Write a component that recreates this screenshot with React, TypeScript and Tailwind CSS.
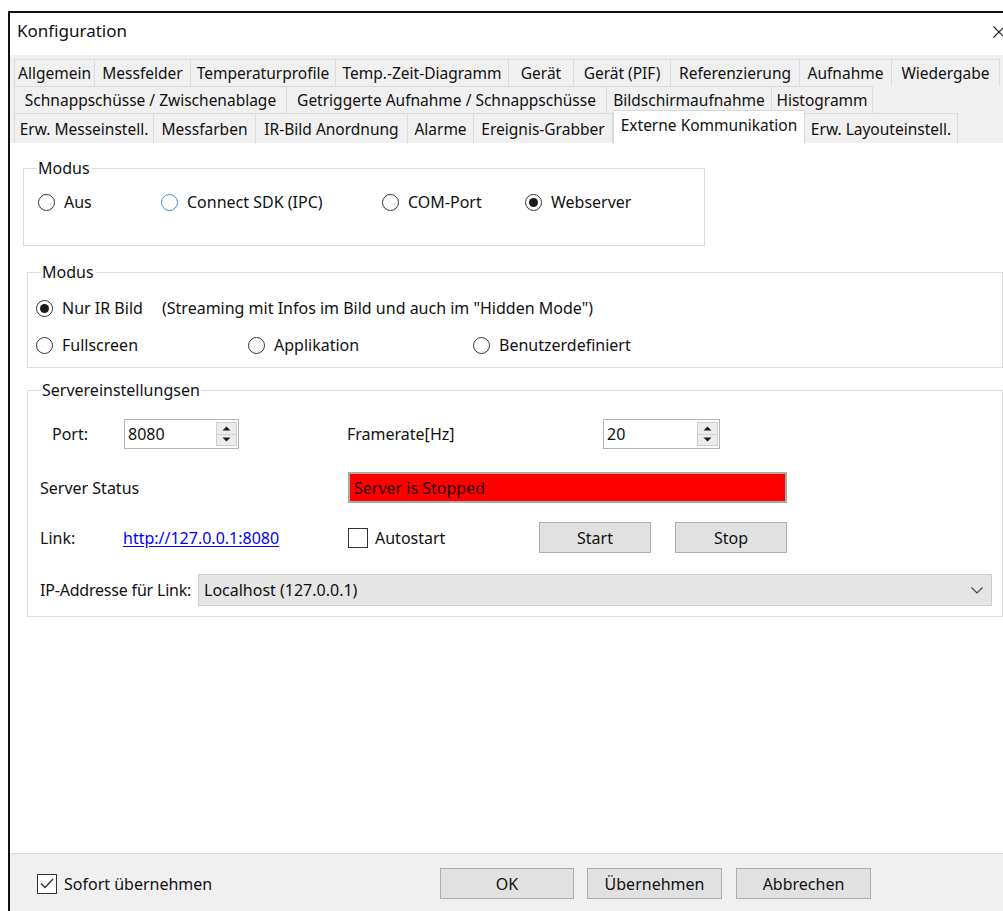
import React from "react";

const FONT = { fontFamily: '"Noto Sans", "Open Sans", "Liberation Sans", sans-serif' };

type Tab = { label: string; w: number; active?: boolean };

const row1: Tab[] = [
  { label: "Allgemein", w: 81 },
  { label: "Messfelder", w: 96 },
  { label: "Temperaturprofile", w: 145 },
  { label: "Temp.-Zeit-Diagramm", w: 173 },
  { label: "Gerät", w: 65 },
  { label: "Gerät (PIF)", w: 97 },
  { label: "Referenzierung", w: 129 },
  { label: "Aufnahme", w: 92 },
  { label: "Wiedergabe", w: 108 },
];

const row2: Tab[] = [
  { label: "Schnappschüsse / Zwischenablage", w: 273 },
  { label: "Getriggerte Aufnahme / Schnappschüsse", w: 320 },
  { label: "Bildschirmaufnahme", w: 165 },
  { label: "Histogramm", w: 101 },
];

const row3: Tab[] = [
  { label: "Erw. Messeinstell.", w: 140 },
  { label: "Messfarben", w: 102 },
  { label: "IR-Bild Anordnung", w: 152 },
  { label: "Alarme", w: 66 },
  { label: "Ereignis-Grabber", w: 139 },
  { label: "Externe Kommunikation", w: 192, active: true },
  { label: "Erw. Layouteinstell.", w: 153 },
];

function TabRow({ tabs, h }: { tabs: Tab[]; h: number }) {
  return (
    <div className="flex items-end" style={{ height: h }}>
      {tabs.map((t, i) =>
        t.active ? (
          <div
            key={t.label}
            className="relative z-10 -mt-[3px] flex h-[calc(100%+4px)] items-start justify-center self-start whitespace-nowrap border-x border-t border-[#d9d9d9] bg-white pt-[4px] text-[15.5px] leading-[20px] text-[#111]"
            style={{ width: t.w }}
          >
            {t.label}
          </div>
        ) : (
          <div
            key={t.label}
            className={
              "flex h-full items-center justify-center whitespace-nowrap border-t border-r border-[#dadada] bg-[#f0f0f0] text-[15.5px] leading-[20px] text-[#111] " +
              (i === 0 ? "border-l" : "")
            }
            style={{ width: t.w }}
          >
            {t.label}
          </div>
        )
      )}
    </div>
  );
}

function Radio({ checked, focus }: { checked?: boolean; focus?: boolean }) {
  return (
    <span
      className={
        "flex h-[17px] w-[17px] shrink-0 items-center justify-center rounded-full border bg-white " +
        (focus ? "border-[#3b8fd6]" : "border-[#333333]")
      }
    >
      {checked && <span className="h-[9px] w-[9px] rounded-full bg-[#1a1a1a]" />}
    </span>
  );
}

function RadioItem({ label, checked, focus }: { label: string; checked?: boolean; focus?: boolean }) {
  return (
    <div className="flex items-center gap-[9px] whitespace-nowrap">
      <Radio checked={checked} focus={focus} />
      <span>{label}</span>
    </div>
  );
}

function Group({ title, titleLeft, children, className }: { title: string; titleLeft: number; children: React.ReactNode; className: string }) {
  return (
    <div className={"relative border border-[#dcdcdc] " + className}>
      <span className="absolute -top-[11px] bg-white px-[1px] leading-[20px]" style={{ left: titleLeft }}>
        {title}
      </span>
      {children}
    </div>
  );
}

function Spinner({ value, w }: { value: string; w: number }) {
  return (
    <div className="flex h-[30px] items-stretch border border-[#b4b4b4] bg-white p-[1px]" style={{ width: w }}>
      <div className="flex flex-1 items-center pl-[2px] leading-[20px]">{value}</div>
      <div className="flex w-[21px] flex-col py-[1px]">
        <div className="flex flex-1 items-center justify-center border border-[#cfcfcf] bg-[#ececec]">
          <svg width="9" height="5" viewBox="0 0 9 5">
            <path d="M0.5 4.5 L4.5 0.5 L8.5 4.5 Z" fill="#1a1a1a" />
          </svg>
        </div>
        <div className="flex flex-1 items-center justify-center border border-t-0 border-[#cfcfcf] bg-[#ececec]">
          <svg width="9" height="5" viewBox="0 0 9 5">
            <path d="M0.5 0.5 L4.5 4.5 L8.5 0.5 Z" fill="#1a1a1a" />
          </svg>
        </div>
      </div>
    </div>
  );
}

function Button({ label, w }: { label: string; w: number }) {
  return (
    <div
      className="flex h-[31px] items-center justify-center border border-[#adadad] bg-[#e1e1e1] leading-[20px] text-[#111]"
      style={{ width: w }}
    >
      {label}
    </div>
  );
}

function Checkbox({ checked }: { checked?: boolean }) {
  return (
    <span className="flex h-[20px] w-[20px] shrink-0 items-center justify-center border border-[#333333] bg-white">
      {checked && (
        <svg width="14" height="11" viewBox="0 0 14 11">
          <path d="M1 5.5 L5 9.5 L13 1" fill="none" stroke="#333333" strokeWidth="1.4" />
        </svg>
      )}
    </span>
  );
}

export default function App() {
  return (
    <div className="h-[911px] w-[1003px] overflow-hidden bg-white text-[16px] text-[#111]" style={FONT}>
      <div className="ml-[8px] mt-[11px] flex h-[900px] flex-col border-l-2 border-t-2 border-[#111]">
        {/* title bar */}
        <div className="flex h-[42px] items-start justify-between bg-white pt-[8px]">
          <span className="pl-[7px] text-[17px] leading-[20px] text-[#111]">Konfiguration</span>
          <svg className="mr-[-2px] mt-[5px]" width="12" height="12" viewBox="0 0 12 12">
            <path d="M0.5 0.5 L11.5 11.5 M11.5 0.5 L0.5 11.5" stroke="#222" strokeWidth="1.1" />
          </svg>
        </div>

        {/* tab headers */}
        <div className="bg-[#f0f0f0] pl-[4px] pt-[4px]">
          <TabRow tabs={row1} h={27} />
          <TabRow tabs={row2} h={27} />
          <TabRow tabs={row3} h={30} />
        </div>

        {/* tab page */}
        <div className="flex flex-1 flex-col bg-white pl-[13px] pt-[25px]">
          <Group title="Modus" titleLeft={13} className="h-[78px] w-[682px] pl-[14px] pt-[23px]">
            <div className="grid h-[20px] grid-cols-[123px_221px_143px_auto] items-center leading-[20px]">
              <RadioItem label="Aus" />
              <RadioItem label="Connect SDK (IPC)" focus />
              <RadioItem label="COM-Port" />
              <RadioItem label="Webserver" checked />
            </div>
          </Group>

          <Group title="Modus" titleLeft={13} className="ml-[4px] mt-[26px] h-[96px] w-[976px] pl-[8px] pt-[25px]">
            <div className="flex h-[20px] items-center whitespace-nowrap leading-[20px]">
              <div className="w-[126px]">
                <RadioItem label="Nur IR Bild" checked />
              </div>
              <span>(Streaming mit Infos im Bild und auch im "Hidden Mode")</span>
            </div>
            <div className="mt-[17px] grid h-[20px] grid-cols-[212px_225px_auto] items-center leading-[20px]">
              <RadioItem label="Fullscreen" />
              <RadioItem label="Applikation" />
              <RadioItem label="Benutzerdefiniert" />
            </div>
          </Group>

          <Group title="Servereinstellungsen" titleLeft={13} className="ml-[4px] mt-[22px] h-[227px] w-[976px] pl-[12px] pt-[28px]">
            <div className="flex h-[30px] items-center leading-[20px]">
              <span className="w-[84px] pl-[12px]">Port:</span>
              <Spinner value="8080" w={115} />
              <span className="ml-[108px] w-[256px]">Framerate[Hz]</span>
              <Spinner value="20" w={117} />
            </div>

            <div className="mt-[23px] flex h-[31px] items-center leading-[20px]">
              <span className="w-[308px]">Server Status</span>
              <div className="flex h-[31px] w-[439px] items-center border-2 border-[#a9a9a9] bg-[#ff0000] pl-[4px] text-[#2a0000]">
                Server is Stopped
              </div>
            </div>

            <div className="mt-[19px] flex h-[31px] items-center leading-[20px]">
              <span className="w-[83px]">Link:</span>
              <span className="w-[225px] text-[#0000ff] underline underline-offset-2">http://127.0.0.1:8080</span>
              <div className="flex w-[191px] items-center gap-[7px]">
                <Checkbox />
                <span>Autostart</span>
              </div>
              <Button label="Start" w={112} />
              <div className="ml-[24px]">
                <Button label="Stop" w={112} />
              </div>
            </div>

            <div className="mt-[21px] flex h-[32px] items-center leading-[20px]">
              <span className="w-[158px] whitespace-nowrap tracking-[-0.2px]">IP-Addresse für Link:</span>
              <div className="flex h-[32px] w-[794px] items-center justify-between border border-[#cccccc] bg-[#e5e5e5] pl-[5px] pr-[8px]">
                <span>Localhost (127.0.0.1)</span>
                <svg width="12" height="7" viewBox="0 0 12 7">
                  <path d="M0.5 0.5 L6 6 L11.5 0.5" fill="none" stroke="#444" strokeWidth="1.1" />
                </svg>
              </div>
            </div>
          </Group>
        </div>

        {/* dialog buttons */}
        <div className="flex h-[58px] shrink-0 items-start border-t border-[#dcdcdc] bg-[#f0f0f0] pl-[27px] pt-[14px]">
          <div className="flex h-[31px] w-[403px] items-center gap-[7px] leading-[20px]">
            <Checkbox checked />
            <span>Sofort übernehmen</span>
          </div>
          <Button label="OK" w={134} />
          <div className="ml-[13px]">
            <Button label="Übernehmen" w={135} />
          </div>
          <div className="ml-[14px]">
            <Button label="Abbrechen" w={135} />
          </div>
        </div>
      </div>
    </div>
  );
}
